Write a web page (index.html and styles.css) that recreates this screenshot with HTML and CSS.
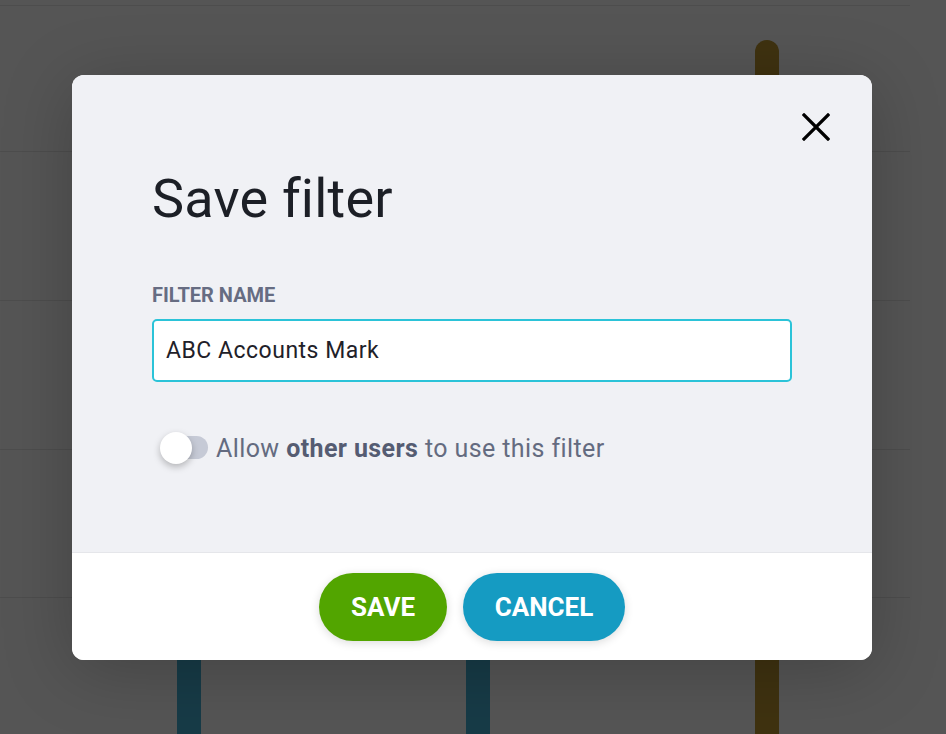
FILE: index.html
```html
<!DOCTYPE html>
<html lang="en">
<head>
<meta charset="utf-8">
<title>Save filter</title>
<link rel="stylesheet" href="styles.css">
</head>
<body>
<div class="backdrop">
  <div class="chart">
    <div class="grid-line" style="top:5px"></div>
    <div class="grid-line" style="top:151px"></div>
    <div class="grid-line" style="top:300px"></div>
    <div class="grid-line" style="top:449px"></div>
    <div class="grid-line" style="top:597px"></div>
    <div class="bar bar-teal" style="left:177px; top:600px"></div>
    <div class="bar bar-teal" style="left:466px; top:600px"></div>
    <div class="bar bar-gold" style="left:755px; top:40px"></div>
  </div>

  <div class="modal">
    <div class="modal-body">
      <button class="close" aria-label="Close">
        <svg width="28" height="28" viewBox="0 0 28 28"><path d="M2 2 L26 26 M26 2 L2 26" stroke="#000" stroke-width="3.2" stroke-linecap="square" fill="none"/></svg>
      </button>
      <h1 class="title">Save filter</h1>
      <label class="field-label" for="fname">FILTER NAME</label>
      <div class="input"><span id="fname">ABC Accounts Mark</span></div>
      <div class="toggle-row">
        <span class="toggle"><span class="track"></span><span class="knob"></span></span>
        <span class="toggle-text">Allow <b>other users</b> to use this filter</span>
      </div>
    </div>
    <div class="modal-footer">
      <button class="btn btn-save">SAVE</button>
      <button class="btn btn-cancel">CANCEL</button>
    </div>
  </div>
</div>
</body>
</html>
```

FILE: styles.css
```css
html, body {
  margin: 0;
  padding: 0;
}
body {
  width: 946px;
  height: 734px;
  overflow: hidden;
  font-family: Roboto, "Liberation Sans", Arial, sans-serif;
  background: #555555;
}
.backdrop {
  position: relative;
  width: 946px;
  height: 734px;
  background: #555555;
}
.chart {
  position: absolute;
  inset: 0;
}
.grid-line {
  position: absolute;
  left: 0;
  width: 910px;
  height: 1px;
  background: #4d4d4d;
}
.bar {
  position: absolute;
  width: 24px;
  bottom: 0;
  border-radius: 12px 12px 0 0;
}
.bar-teal { background: #173b47; }
.bar-gold { background: #3f3210; }

.modal {
  position: absolute;
  left: 72px;
  top: 75px;
  width: 800px;
  height: 585px;
  border-radius: 12px;
  overflow: hidden;
  background: #ffffff;
  box-shadow: 0 10px 70px rgba(0, 0, 0, 0.22);
  display: flex;
  flex-direction: column;
}
.modal-body {
  position: relative;
  height: 477px;
  box-sizing: border-box;
  background: #f0f1f5;
  padding: 92px 80px 0 80px;
  display: flex;
  flex-direction: column;
}
.close {
  position: absolute;
  top: 38px;
  right: 42px;
  width: 28px;
  height: 28px;
  padding: 0;
  border: 0;
  background: transparent;
  display: flex;
}
.title {
  margin: 0;
  font-size: 54px;
  line-height: 64px;
  font-weight: 400;
  letter-spacing: 0.2px;
  color: #1c1f26;
}
.field-label {
  margin-top: 52px;
  font-size: 20px;
  line-height: 24px;
  font-weight: 700;
  color: #666c82;
}
.input {
  margin-top: 12px;
  height: 63px;
  box-sizing: border-box;
  border: 2px solid #2bc3d8;
  border-radius: 5px;
  background: #ffffff;
  padding: 0 12px;
  display: flex;
  align-items: center;
  font-size: 23px;
  letter-spacing: 0.5px;
  color: #1f2129;
}
.toggle-row {
  margin-top: 50px;
  display: flex;
  align-items: center;
  height: 32px;
  padding-left: 8px;
  gap: 8px;
}
.toggle {
  position: relative;
  width: 48px;
  height: 32px;
  flex: none;
}
.track {
  position: absolute;
  left: 5px;
  right: 0;
  top: 4px;
  height: 23px;
  border-radius: 12px;
  background: #c6cad6;
}
.knob {
  position: absolute;
  left: 0;
  top: 0;
  width: 32px;
  height: 32px;
  border-radius: 50%;
  background: #ffffff;
  box-shadow: 0 3px 7px rgba(0, 0, 0, 0.25);
}
.toggle-text {
  font-size: 25px;
  letter-spacing: 0.4px;
  color: #646b80;
}
.toggle-text b {
  font-weight: 700;
  color: #555c72;
}
.modal-footer {
  flex: 1;
  border-top: 1px solid #e5e6ea;
  background: #ffffff;
  display: flex;
  justify-content: center;
  align-items: center;
  gap: 16px;
}
.btn {
  height: 68px;
  border: 0;
  border-radius: 34px;
  color: #ffffff;
  font-family: Roboto, "Liberation Sans", Arial, sans-serif;
  font-size: 26px;
  font-weight: 700;
  padding: 0;
  box-shadow: 0 2px 10px rgba(0, 0, 0, 0.14);
}
.btn-save {
  width: 128px;
  background: #52a500;
}
.btn-cancel {
  width: 162px;
  background: #159bc2;
}
```
